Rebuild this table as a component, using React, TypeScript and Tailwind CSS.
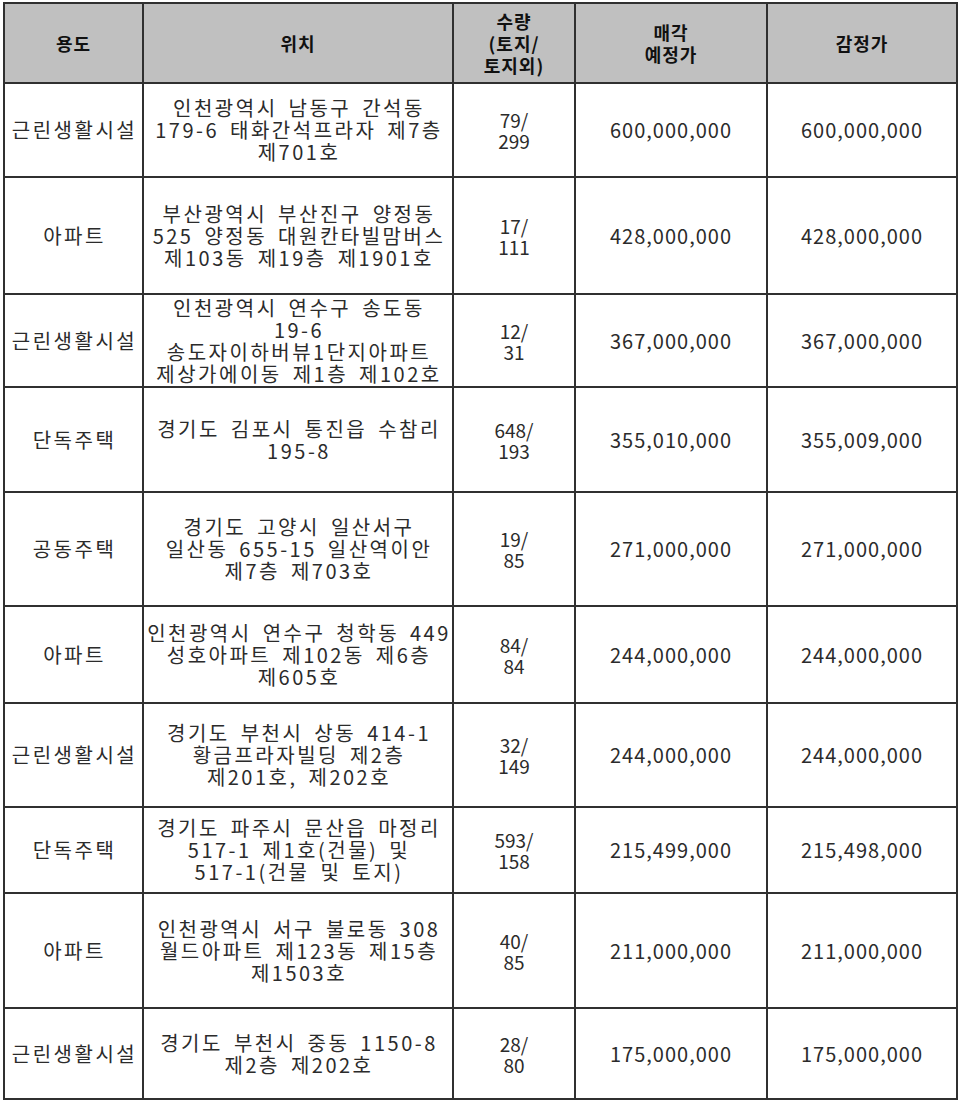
import React from 'react';

type Row = {
  use: string;
  location: string[];
  qty: [string, string];
  sale: string;
  appraisal: string;
  h: string;
};

const rows: Row[] = [
  {
    use: '근린생활시설',
    location: ['인천광역시 남동구 간석동', '179-6 태화간석프라자 제7층', '제701호'],
    qty: ['79/', '299'],
    sale: '600,000,000',
    appraisal: '600,000,000',
    h: 'h-[92px]'
  },
  {
    use: '아파트',
    location: ['부산광역시 부산진구 양정동', '525 양정동 대원칸타빌맘버스', '제103동 제19층 제1901호'],
    qty: ['17/', '111'],
    sale: '428,000,000',
    appraisal: '428,000,000',
    h: 'h-[115px]'
  },
  {
    use: '근린생활시설',
    location: ['인천광역시 연수구 송도동', '19-6', '송도자이하버뷰1단지아파트', '제상가에이동 제1층 제102호'],
    qty: ['12/', '31'],
    sale: '367,000,000',
    appraisal: '367,000,000',
    h: 'h-[91px]'
  },
  {
    use: '단독주택',
    location: ['경기도 김포시 통진읍 수참리', '195-8'],
    qty: ['648/', '193'],
    sale: '355,010,000',
    appraisal: '355,009,000',
    h: 'h-[103px]'
  },
  {
    use: '공동주택',
    location: ['경기도 고양시 일산서구', '일산동 655-15 일산역이안', '제7층 제703호'],
    qty: ['19/', '85'],
    sale: '271,000,000',
    appraisal: '271,000,000',
    h: 'h-[112px]'
  },
  {
    use: '아파트',
    location: ['인천광역시 연수구 청학동 449', '성호아파트 제102동 제6층', '제605호'],
    qty: ['84/', '84'],
    sale: '244,000,000',
    appraisal: '244,000,000',
    h: 'h-[95px]'
  },
  {
    use: '근린생활시설',
    location: ['경기도 부천시 상동 414-1', '황금프라자빌딩 제2층', '제201호, 제202호'],
    qty: ['32/', '149'],
    sale: '244,000,000',
    appraisal: '244,000,000',
    h: 'h-[102px]'
  },
  {
    use: '단독주택',
    location: ['경기도 파주시 문산읍 마정리', '517-1 제1호(건물) 및', '517-1(건물 및 토지)'],
    qty: ['593/', '158'],
    sale: '215,499,000',
    appraisal: '215,498,000',
    h: 'h-[84px]'
  },
  {
    use: '아파트',
    location: ['인천광역시 서구 불로동 308', '월드아파트 제123동 제15층', '제1503호'],
    qty: ['40/', '85'],
    sale: '211,000,000',
    appraisal: '211,000,000',
    h: 'h-[113px]'
  },
  {
    use: '근린생활시설',
    location: ['경기도 부천시 중동 1150-8', '제2층 제202호'],
    qty: ['28/', '80'],
    sale: '175,000,000',
    appraisal: '175,000,000',
    h: 'h-[89px]'
  }
];

const cell = 'bg-white flex flex-col items-center justify-center text-center';

export default function App() {
  return (
    <div className="w-[960px] h-[1106px] bg-white pt-[2px] pl-[3px] font-['Noto_Sans_CJK_KR',sans-serif] text-[20px] leading-[22px] text-[#2b2b2b]">
      <div className="grid w-[955px] grid-cols-[137px_308px_120px_190px_188px] gap-[2px] p-[2px] bg-[#303030]">
        {/* header */}
        {[['용도'], ['위치'], ['수량', '(토지/', '토지외)'], ['매각', '예정가'], ['감정가']].map((lines, i) => (
          <div
            key={i}
            className="h-[78px] bg-[#c0c0c0] flex flex-col items-center justify-center text-center font-bold text-[18px] text-[#111] tracking-[1px] leading-[22px]"
          >
            {lines.map((l) => (
              <span key={l}>{l}</span>
            ))}
          </div>
        ))}
        {rows.map((r, idx) => (
          <React.Fragment key={idx}>
            <div className={`${cell} ${r.h} tracking-[2.5px] pl-[2px]`}>{r.use}</div>
            <div className={`${cell} ${r.h} tracking-[2.5px] [word-spacing:4px] pl-[2px]`}>
              {r.location.map((l, i) => (
                <span key={i} className="whitespace-nowrap">
                  {l}
                </span>
              ))}
            </div>
            <div className={`${cell} ${r.h} text-[19px] leading-[21px] tracking-[0px]`}>
              <span>{r.qty[0]}</span>
              <span>{r.qty[1]}</span>
            </div>
            <div className={`${cell} ${r.h} tracking-[1px]`}>{r.sale}</div>
            <div className={`${cell} ${r.h} tracking-[1px]`}>{r.appraisal}</div>
          </React.Fragment>
        ))}
      </div>
    </div>
  );
}
